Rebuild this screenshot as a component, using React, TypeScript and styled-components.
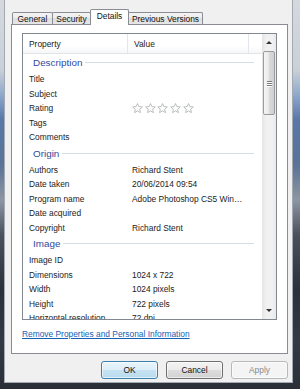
import React from "react"
import styled, { createGlobalStyle } from "styled-components"

const GlobalStyle = createGlobalStyle`
  html, body {
    margin: 0;
    padding: 0;
  }
  body {
    width: 300px;
    height: 389px;
    overflow: hidden;
    font-family: "Liberation Sans", Arial, sans-serif;
    font-size: 8.4px;
    color: #1b1b1b;
  }
`

const Frame = styled.div`
  box-sizing: border-box;
  width: 300px;
  height: 389px;
  padding: 0 7px 6px 4px;
  background: linear-gradient(
    to bottom,
    #d5d9de 0px,
    #c9d0d8 70px,
    #8ea8cc 95px,
    #5877a8 120px,
    #5a7397 165px,
    #8d96a3 200px,
    #4a515d 235px,
    #2b313b 290px,
    #343a45 340px,
    #2a2f37 389px
  );
`

const Client = styled.div`
  box-sizing: border-box;
  height: 100%;
  background: #f0f0f0;
  border: 1px solid #a3a9b0;
  border-top: none;
  padding: 9px 4px 0 6px;
  display: flex;
  flex-direction: column;
`

const TabStrip = styled.div`
  display: flex;
  align-items: flex-end;
  height: 15px;
  padding-left: 1px;
  position: relative;
  z-index: 1;
`

const Tab = styled.div<{ $active?: boolean; $w: number }>`
  box-sizing: border-box;
  width: ${(p) => p.$w}px;
  height: ${(p) => (p.$active ? 16 : 12)}px;
  margin-bottom: ${(p) => (p.$active ? -1 : 0)}px;
  margin-left: -1px;
  padding-bottom: ${(p) => (p.$active ? 3 : 0)}px;
  border: 1px solid #898c95;
  border-bottom: none;
  border-radius: 2px 2px 0 0;
  background: ${(p) =>
    p.$active
      ? "#ffffff"
      : "linear-gradient(#f4f4f4, #ececec 50%, #dfdfdf 50%, #e6e6e6)"};
  display: flex;
  align-items: center;
  justify-content: center;
  white-space: nowrap;
  color: #111;

  &:first-child {
    margin-left: 0;
  }
`

const Panel = styled.div`
  box-sizing: border-box;
  height: 330px;
  background: #ffffff;
  border: 1px solid #898c95;
  padding: 8px 10px 0;
  display: flex;
  flex-direction: column;
`

const ListView = styled.div`
  box-sizing: border-box;
  height: 287px;
  border: 1px solid #828790;
  display: flex;
  overflow: hidden;
`

const Columns = styled.div`
  flex: 1;
  min-width: 0;
  display: flex;
  flex-direction: column;
  overflow: hidden;
`

const Header = styled.div`
  box-sizing: border-box;
  height: 20px;
  flex-shrink: 0;
  display: flex;
  background: linear-gradient(#ffffff, #ffffff 60%, #f6f7f8);
  border-bottom: 1px solid #e2e4e7;
`

const HeaderCell = styled.div<{ $w?: number }>`
  box-sizing: border-box;
  ${(p) => (p.$w ? `width: ${p.$w}px;` : "flex: 1;")}
  padding-left: 6px;
  display: flex;
  align-items: center;
  border-right: ${(p) => (p.$w ? "1px solid #e3e6ea" : "none")};
`

const GroupHeader = styled.div`
  box-sizing: border-box;
  height: 18px;
  flex-shrink: 0;
  padding: 0 8px 1px 10px;
  display: flex;
  align-items: center;
  gap: 3px;
  font-size: 9.9px;
  color: #2f4aa0;
`

const GroupLine = styled.div`
  flex: 1;
  height: 1px;
  background: #d6dde7;
`

const Row = styled.div`
  height: 14.5px;
  flex-shrink: 0;
  display: flex;
  align-items: center;
  white-space: nowrap;
`

const NameCell = styled.div`
  box-sizing: border-box;
  width: 109px;
  padding-left: 6px;
  flex-shrink: 0;
`

const ValueCell = styled.div`
  display: flex;
  align-items: center;
  gap: 1.7px;
`

const Scrollbar = styled.div`
  width: 14px;
  flex-shrink: 0;
  display: flex;
  flex-direction: column;
  background: linear-gradient(to right, #e4e4e4, #f1f1f1 30%, #f1f1f1 70%, #e9e9e9);
`

const ScrollButton = styled.div`
  height: 17px;
  flex-shrink: 0;
  display: flex;
  align-items: center;
  justify-content: center;
`

const Arrow = styled.div<{ $down?: boolean }>`
  width: 0;
  height: 0;
  border-left: 3px solid transparent;
  border-right: 3px solid transparent;
  ${(p) => (p.$down ? "border-top: 3px solid #333;" : "border-bottom: 3px solid #333;")}
`

const Thumb = styled.div`
  box-sizing: border-box;
  height: 64px;
  margin: 0 1px;
  border: 1px solid #9b9b9b;
  border-radius: 2px;
  background: linear-gradient(to right, #f6f6f6, #e9e9e9 45%, #d9d9d9 55%, #d0d0d0);
  display: flex;
  flex-direction: column;
  align-items: center;
  justify-content: center;
  gap: 1px;
`

const Grip = styled.div`
  width: 5px;
  height: 1px;
  background: #7a7a7a;
  box-shadow: 0 1px 0 #ffffff;
`

const Track = styled.div`
  flex: 1;
`

const Link = styled.a`
  margin-top: 8px;
  line-height: 12px;
  color: #1660b4;
  text-decoration: underline;
  align-self: flex-start;
`

const ButtonRow = styled.div`
  display: flex;
  justify-content: flex-end;
  gap: 8px;
  margin-top: 7px;
`

const DialogButton = styled.button<{ $kind?: "default" | "disabled" }>`
  box-sizing: border-box;
  width: 57px;
  height: 18px;
  padding: 0;
  font-family: inherit;
  font-size: 8.4px;
  border-radius: 3px;
  border: 1px solid
    ${(p) =>
      p.$kind === "default" ? "#3c7fb1" : p.$kind === "disabled" ? "#b5b9bc" : "#707070"};
  color: ${(p) => (p.$kind === "disabled" ? "#8a8a8a" : "#111")};
  background: ${(p) =>
    p.$kind === "default"
      ? "linear-gradient(#eaf5fb, #dbeef8 50%, #c6e3f3 50%, #b8dbef)"
      : p.$kind === "disabled"
        ? "#f4f4f4"
        : "linear-gradient(#f3f3f3, #ebebeb 50%, #dddddd 50%, #d1d1d1)"};
  box-shadow: inset 0 0 0 1px rgba(255, 255, 255, 0.6);
`

const Star = () => (
  <svg width="11" height="11" viewBox="0 0 12 12">
    <path
      d="M6 0.6 L7.5 3.9 L11.2 4.3 L8.4 6.8 L9.2 10.5 L6 8.6 L2.8 10.5 L3.6 6.8 L0.8 4.3 L4.5 3.9 Z"
      fill="#fdfdfd"
      stroke="#aeb0b3"
      strokeWidth="0.9"
      strokeLinejoin="round"
    />
  </svg>
)

type Item = [string, string]
type Group = { title: string; rows: Item[] }

const groups: Group[] = [
  {
    title: "Description",
    rows: [
      ["Title", ""],
      ["Subject", ""],
      ["Rating", "*"],
      ["Tags", ""],
      ["Comments", ""],
    ],
  },
  {
    title: "Origin",
    rows: [
      ["Authors", "Richard Stent"],
      ["Date taken", "20/06/2014 09:54"],
      ["Program name", "Adobe Photoshop CS5 Win…"],
      ["Date acquired", ""],
      ["Copyright", "Richard Stent"],
    ],
  },
  {
    title: "Image",
    rows: [
      ["Image ID", ""],
      ["Dimensions", "1024 x 722"],
      ["Width", "1024 pixels"],
      ["Height", "722 pixels"],
      ["Horizontal resolution", "72 dpi"],
    ],
  },
]

const tabs = [
  { label: "General", w: 41 },
  { label: "Security", w: 39 },
  { label: "Details", w: 39, active: true },
  { label: "Previous Versions", w: 75 },
]

const App: React.FC = () => {
  return (
    <>
      <GlobalStyle />
      <Frame>
        <Client>
          <TabStrip>
            {tabs.map((t) => (
              <Tab key={t.label} $w={t.w} $active={t.active}>
                {t.label}
              </Tab>
            ))}
          </TabStrip>
          <Panel>
            <ListView>
              <Columns>
                <Header>
                  <HeaderCell $w={105}>Property</HeaderCell>
                  <HeaderCell $w={121}>Value</HeaderCell>
                  <HeaderCell />
                </Header>
                {groups.map((g) => (
                  <React.Fragment key={g.title}>
                    <GroupHeader>
                      <span>{g.title}</span>
                      <GroupLine />
                    </GroupHeader>
                    {g.rows.map(([name, value]) => (
                      <Row key={name}>
                        <NameCell>{name}</NameCell>
                        <ValueCell>
                          {value === "*"
                            ? [0, 1, 2, 3, 4].map((i) => <Star key={i} />)
                            : value}
                        </ValueCell>
                      </Row>
                    ))}
                  </React.Fragment>
                ))}
              </Columns>
              <Scrollbar>
                <ScrollButton>
                  <Arrow />
                </ScrollButton>
                <Thumb>
                  <Grip />
                  <Grip />
                  <Grip />
                </Thumb>
                <Track />
                <ScrollButton>
                  <Arrow $down />
                </ScrollButton>
              </Scrollbar>
            </ListView>
            <Link>Remove Properties and Personal Information</Link>
          </Panel>
          <ButtonRow>
            <DialogButton $kind="default">OK</DialogButton>
            <DialogButton>Cancel</DialogButton>
            <DialogButton $kind="disabled">Apply</DialogButton>
          </ButtonRow>
        </Client>
      </Frame>
    </>
  )
}

export default App
